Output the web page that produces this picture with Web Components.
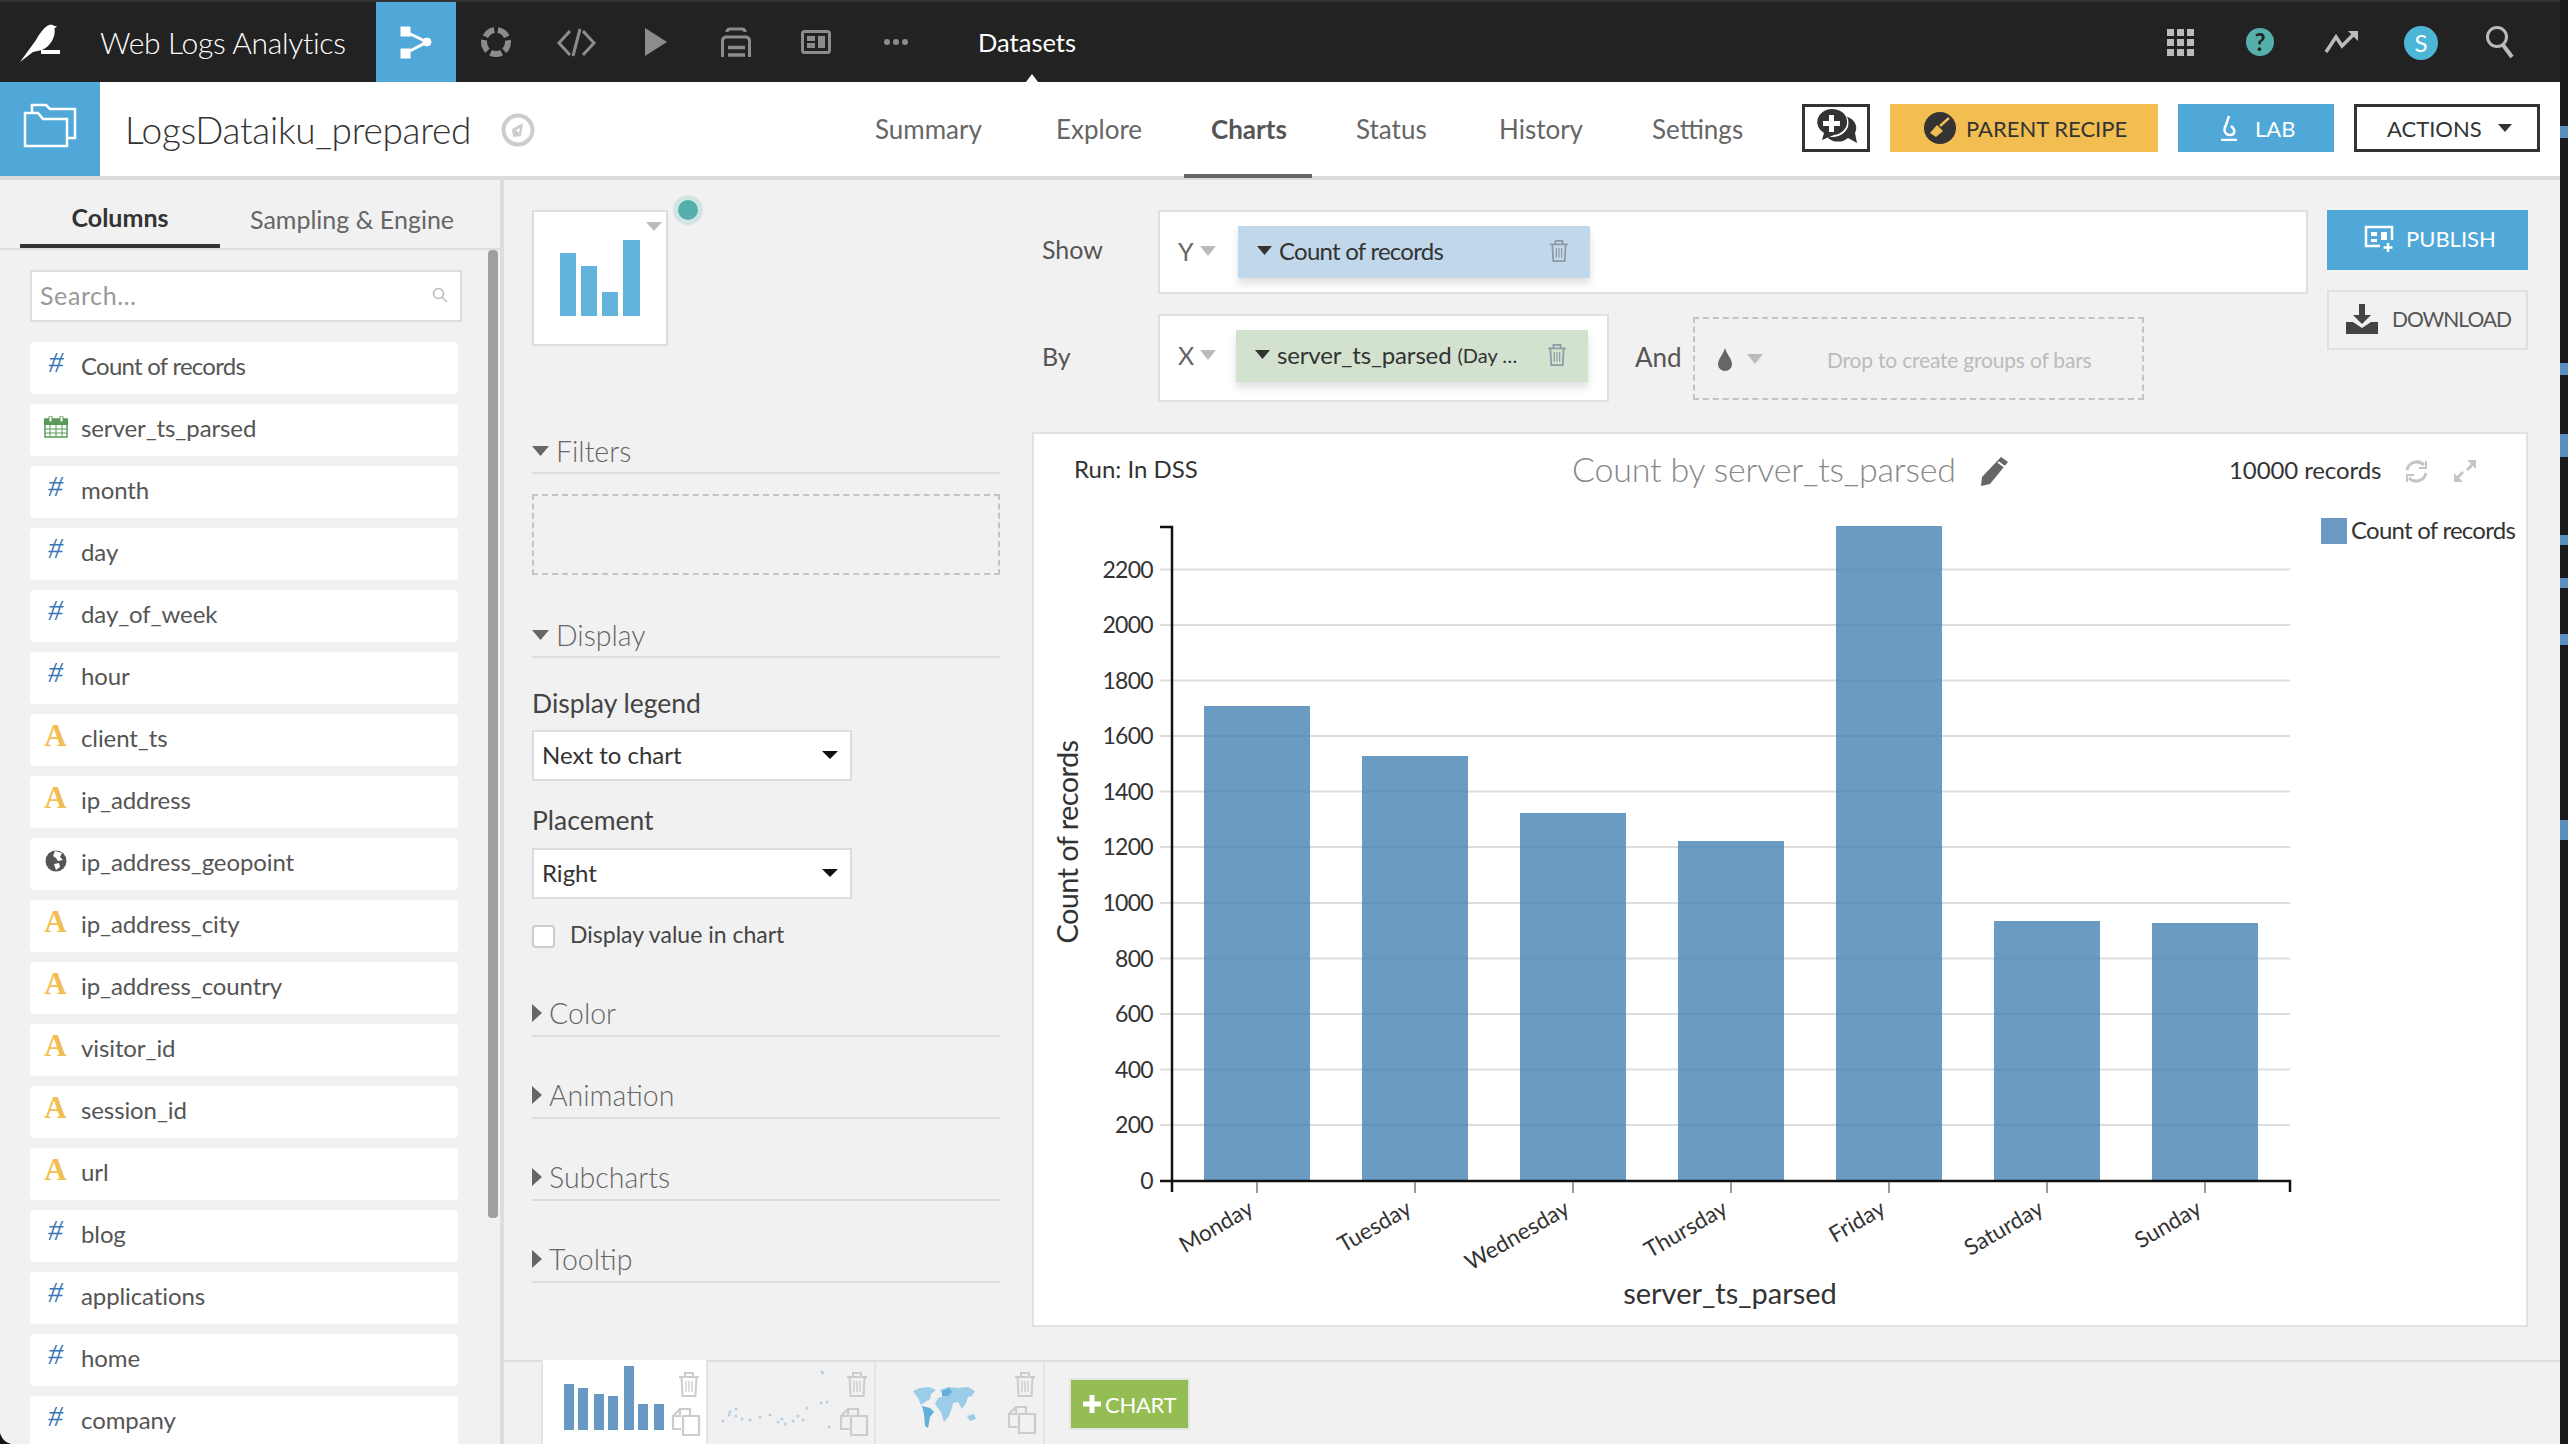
<!DOCTYPE html>
<html>
<head>
<meta charset="utf-8">
<title>Web Logs Analytics</title>
<style>
  html, body { margin: 0; height: 100%; }
  body { display: flex; width: 2568px; height: 1444px; overflow: hidden; background: #141414; font-family: "Lato", "Noto Sans", sans-serif; color: #333; }
</style>
</head>
<body>
<dss-app>
  <dss-topbar></dss-topbar>
  <dss-subbar></dss-subbar>
  <dss-main></dss-main>
</dss-app>
<window-edge></window-edge>

<script>
// iconos que se usan en varios componentes
const trashIcon = (x, y, color) => `
  <g transform="translate(${x} ${y})" fill="none" stroke="${color}" stroke-width="2">
    <path d="M0 5h20M6 5V1h8v4M2.500 5l1 19h13l1-19"/>
    <path d="M7 9v11M10 9v11M13 9v11" stroke-width="1.300"/>
  </g>`;

const copyIcon = (x, y, color) => `
  <g transform="translate(${x} ${y})" fill="none" stroke="${color}" stroke-width="2.200">
    <path d="M9 21H1V8l7-7h10v6"/>
    <path d="M1 8h7V1"/>
    <path d="M11 8h16v19H11z"/>
  </g>`;

class DssApp extends HTMLElement {
  connectedCallback() {
    this.attachShadow({ mode: 'open' }).innerHTML = `
      <style>
        :host { display: flex; flex-direction: column; width: 2560px; height: 1444px; background: #f1f1f1; border-bottom-left-radius: 14px; overflow: hidden; }
      </style>
      <slot></slot>`;
  }
}
customElements.define('dss-app', DssApp);

class WindowEdge extends HTMLElement {
  connectedCallback() {
    const blocks = [[126,138],[363,375],[434,457],[535,545],[578,588],[634,645],[820,840]];
    const stops = blocks.map(b => `linear-gradient(#5b8fc0,#5b8fc0) 0 ${b[0]}px / 100% ${b[1]-b[0]}px no-repeat`).join(',');
    this.attachShadow({ mode: 'open' }).innerHTML = `
      <style>:host { display: block; width: 8px; height: 1444px; background: ${stops}, #1a1a1a; }</style>`;
  }
}
customElements.define('window-edge', WindowEdge);

class DssTopbar extends HTMLElement {
  connectedCallback() {
    this.attachShadow({ mode: 'open' }).innerHTML = `
      <style>
        :host { display: block; height: 82px; box-sizing: border-box; border-top: 2px solid #333; background: #222; position: relative; flex: none; }
        svg { position: absolute; left: 0; top: -2px; display: block; }
        .bar { display: flex; height: 80px; align-items: center; }
        .name { margin-left: 100px; width: 276px; color: #fff; font-size: 30px; font-weight: 300; letter-spacing: -.3px; white-space: nowrap; }
        .flow { width: 80px; height: 80px; background: #4fa8d8; }
        .ds { margin-left: 522px; color: #fff; font-size: 25.5px; white-space: nowrap; }
      </style>
      <div class="bar">
        <span class="name">Web Logs Analytics</span>
        <div class="flow"></div>
        <span class="ds">Datasets</span>
      </div>
      <svg width="2560" height="82" viewBox="0 0 2560 82">
        <path fill="#fff" d="M20 62 L36 40 C39 34 43 29 47 26 C50 24 53 24.500 54 26 L57 26 L54.500 28.500 C56 37 50 47 42 50 L33 52 Z"/>
        <rect x="41" y="50" width="19" height="4" fill="#fff"/>
        <g fill="#fff" stroke="#fff">
          <rect x="401" y="27" width="9" height="9"/><rect x="401" y="49" width="9" height="9"/>
          <circle cx="427" cy="42" r="4"/>
          <path d="M406 32 L427 42 L406 53" fill="none" stroke-width="3"/>
        </g>
        <circle cx="496" cy="42" r="12" fill="none" stroke="#8c8c8c" stroke-width="6" stroke-dasharray="11.400 3.680" transform="rotate(62 496 42)"/>
        <path d="M570 31 L559 43 L570 55 M583 31 L594 43 L583 55 M580 29 L573 56" fill="none" stroke="#8c8c8c" stroke-width="3"/>
        <polygon points="645,28 667,42 645,56" fill="#8c8c8c"/>
        <g fill="none" stroke="#8c8c8c" stroke-width="3">
          <path d="M727 32 q0-3 3-3 h12 q3 0 3 3"/>
          <path d="M722.500 57 V41 q0-4 4-4 h19 q4 0 4 4 V57"/>
          <path d="M728 47.500 h17 M728 55 h17" stroke-width="3.500"/>
        </g>
        <rect x="802.500" y="31.500" width="27" height="21" rx="2" fill="none" stroke="#8c8c8c" stroke-width="3"/>
        <path d="M807 36h8v5h-8zM807 43h8v5h-8zM818 36h7v12h-7z" fill="#8c8c8c"/>
        <g fill="#8c8c8c"><circle cx="887" cy="42" r="3"/><circle cx="896" cy="42" r="3"/><circle cx="905" cy="42" r="3"/></g>
        <polygon points="1026,82 1032,74 1038,82" fill="#fff"/>
        <path fill="#bbb" d="M2167 29h7v7h-7zM2177 29h7v7h-7zM2187 29h7v7h-7zM2167 39h7v7h-7zM2177 39h7v7h-7zM2187 39h7v7h-7zM2167 49h7v7h-7zM2177 49h7v7h-7zM2187 49h7v7h-7z"/>
        <circle cx="2260" cy="42" r="14" fill="#55afaa"/>
        <text x="2260" y="51" text-anchor="middle" fill="#222" font-size="24" font-weight="700">?</text>
        <path d="M2326 52 L2336 37 L2342 46 L2354 34" fill="none" stroke="#bbb" stroke-width="3.500"/>
        <polygon points="2348,31 2358,31 2358,41" fill="#bbb"/>
        <circle cx="2421" cy="43" r="17" fill="#4db6d6"/>
        <text x="2421" y="52" text-anchor="middle" fill="#fff" font-size="24">S</text>
        <circle cx="2497" cy="37" r="9.500" fill="none" stroke="#bbb" stroke-width="3"/>
        <path d="M2503 45 L2512 57" stroke="#bbb" stroke-width="4"/>
      </svg>`;
  }
}
customElements.define('dss-topbar', DssTopbar);

class DssSubbar extends HTMLElement {
  connectedCallback() {
    const tabs = [['Summary', 875], ['Explore', 1056], ['Charts', 1211], ['Status', 1356], ['History', 1499], ['Settings', 1652]];
    this.attachShadow({ mode: 'open' }).innerHTML = `
      <style>
        :host { display: flex; height: 98px; box-sizing: border-box; border-bottom: 4px solid #ddd; background: #fff; flex: none; align-items: stretch; position: relative; }
        .box { width: 100px; height: 94px; background: #4fa8d8; flex: none; }
        .box svg { display: block; }
        .title { margin-left: 25px; font-size: 37px; font-weight: 300; letter-spacing: -.3px; color: #333; line-height: 96px; width: 376px; white-space: nowrap; flex: none; }
        .compass { margin-top: 31px; flex: none; }
        .tabs { position: absolute; left: 0; top: 0; height: 94px; width: 0; }
        .tab { position: absolute; top: 0; line-height: 94px; font-size: 26px; color: #666; white-space: nowrap; }
        .tab.on { font-weight: 700; color: #555; }
        .under { position: absolute; left: 1184px; top: 92px; width: 128px; height: 4px; background: #666; }
        .btns { position: absolute; left: 1802px; top: 22px; display: flex; height: 48px; }
        .b { box-sizing: border-box; height: 48px; display: flex; align-items: center; font-size: 22px; white-space: nowrap; }
        .talk { width: 68px; border: 3px solid #333; margin-right: 20px; }
        .parent { width: 268px; background: #f2bd51; color: #333; margin-right: 20px; padding-left: 34px; }
        .lab { width: 156px; background: #4fa8d8; color: #fff; margin-right: 20px; padding-left: 42px; }
        .act { width: 186px; border: 3px solid #333; background: #fff; color: #333; padding-left: 30px; font-size: 22px; }
        svg { flex: none; }
      </style>
      <div class="box">
        <svg width="100" height="94" viewBox="0 82 100 94" fill="none" stroke="#fff" stroke-width="2.500">
          <path d="M32 112 V105 H46 L50 109 H75 V138 H68"/>
          <path d="M25 113 H38 L43 119 H67 V146 H25 Z"/>
        </svg>
      </div>
      <div class="title">LogsDataiku_prepared</div>
      <svg class="compass" width="34" height="34" viewBox="0 0 34 34">
        <circle cx="17" cy="17" r="14.500" fill="none" stroke="#ccc" stroke-width="4"/>
        <polygon points="11,16 22,10 20,23 12,24" fill="#ccc"/>
        <polygon points="15,17 19,15 18,20" fill="#fff"/>
      </svg>
      <div class="tabs">
        ${tabs.map(t => `<span class="tab${t[0] === 'Charts' ? ' on' : ''}" style="left:${t[1]}px">${t[0]}</span>`).join('')}
      </div>
      <div class="under"></div>
      <div class="btns">
        <div class="b talk">
          <svg width="62" height="42" viewBox="0 0 62 42">
            <path fill="#333" d="M38 9a14 12 0 0 1 12 17l2 10-9-5a14 12 0 0 1-20 0 z"/>
            <ellipse cx="27" cy="16" rx="16.500" ry="14" fill="#fff"/>
            <path fill="#333" d="M26 2a14.500 13 0 0 1 3 26l-12 5 2-7a14.500 13 0 0 1 7-24z"/>
            <path fill="#fff" d="M24 8h5v6h6v5h-6v6h-5v-6h-6v-5h6z"/>
          </svg>
        </div>
        <div class="b parent">
          <svg width="32" height="32" viewBox="0 0 32 32" style="margin-right:10px">
            <circle cx="16" cy="16" r="16" fill="#333"/>
            <path fill="#f2bd51" d="M6 21 L13 13 L19 19 L12 25 Z"/>
            <path d="M16 14 L25 6" stroke="#f2bd51" stroke-width="2.500"/>
          </svg>PARENT RECIPE
        </div>
        <div class="b lab">
          <svg width="18" height="26" viewBox="0 0 18 26" fill="none" stroke="#fff" stroke-width="2.500" style="margin-right:17px">
            <path d="M9 1 L6 10 C3 15 5 20 10 20 C15 20 16 15 11 11 M1 25 H17"/>
          </svg>LAB
        </div>
        <div class="b act">ACTIONS
          <svg width="14" height="8" viewBox="0 0 14 8" style="margin-left:16px"><polygon points="0,0 14,0 7,8" fill="#333"/></svg>
        </div>
      </div>`;
  }
}
customElements.define('dss-subbar', DssSubbar);

class ColItem extends HTMLElement {
  connectedCallback() {
    const type = this.getAttribute('type');
    let icon = '';
    if (type === 'num') icon = '<span class="num">#</span>';
    if (type === 'str') icon = '<span class="str">A</span>';
    if (type === 'date') icon = `<svg width="24" height="22" viewBox="0 0 24 22">
        <rect x="1" y="3" width="22" height="18" fill="#fff" stroke="#5b9a5b" stroke-width="1.500"/>
        <rect x="0" y="3" width="24" height="6" fill="#5b9a5b"/>
        <path d="M1 13h22M1 17h22M6 9v12M12 9v12M18 9v12" stroke="#5b9a5b"/>
        <rect x="5" y="0" width="3" height="6" rx="1" fill="#fff" stroke="#5b9a5b"/>
        <rect x="16" y="0" width="3" height="6" rx="1" fill="#fff" stroke="#5b9a5b"/>
      </svg>`;
    if (type === 'geo') icon = `<svg width="22" height="22" viewBox="0 0 22 22">
        <circle cx="11" cy="11" r="10.500" fill="#555"/>
        <path d="M10 1 L17 3 L15 7 L18 10 L13 11 L11 8 L8 6 Z M9 14 L14 13 L15 17 L11 20 Z" fill="#fff"/>
      </svg>`;
    const tight = this.textContent === 'Count of records' ? 'letter-spacing:-.75px;' : 'letter-spacing:-.1px;';
    this.attachShadow({ mode: 'open' }).innerHTML = `
      <style>
        :host { display: flex; width: 428px; height: 52px; box-sizing: border-box; padding-bottom: 6px; flex: none; background: #fff; border-radius: 4px; align-items: center; margin-bottom: 10px; font-size: 24px; color: #555; ${tight} }
        .ic { width: 51px; display: flex; justify-content: center; flex: none; }
        .num { font-family: "Liberation Serif", serif; font-style: italic; color: #3a77b8; font-size: 30px; line-height: 30px; margin-top: -6px; }
        .str { font-family: "Liberation Serif", serif; color: #f2bd51; font-size: 31px; font-weight: 700; line-height: 30px; margin-top: -3px; }
      </style>
      <div class="ic">${icon}</div><slot></slot>`;
  }
}
customElements.define('col-item', ColItem);

class DssColumns extends HTMLElement {
  connectedCallback() {
    const cols = [['num','Count of records'],['date','server_ts_parsed'],['num','month'],['num','day'],['num','day_of_week'],['num','hour'],
      ['str','client_ts'],['str','ip_address'],['geo','ip_address_geopoint'],['str','ip_address_city'],['str','ip_address_country'],['str','visitor_id'],
      ['str','session_id'],['str','url'],['num','blog'],['num','applications'],['num','home'],['num','company']];
    this.attachShadow({ mode: 'open' }).innerHTML = `
      <style>
        :host { display: block; width: 500px; height: 1264px; flex: none; border-right: 4px solid #ddd; position: relative; background: #f1f1f1; overflow: hidden; }
        .tabs { display: flex; height: 68px; border-bottom: 2px solid #ddd; padding-left: 20px; align-items: flex-start; }
        .t1 { width: 200px; height: 64px; border-bottom: 4px solid #333; text-align: center; font-size: 25px; font-weight: 700; line-height: 75px; color: #333; }
        .t2 { margin-left: 30px; font-size: 25px; line-height: 78px; color: #666; white-space: nowrap; }
        .search { margin: 20px 0 20px 30px; width: 432px; height: 52px; box-sizing: border-box; border: 2px solid #ddd; background: #fff; display: flex; align-items: center; justify-content: space-between; padding: 0 12px 2px 8px; color: #999; font-size: 25px; letter-spacing: .6px; }
        .list { display: flex; flex-direction: column; margin-left: 30px; }
        .thumb { position: absolute; left: 488px; top: 70px; width: 10px; height: 968px; background: #a0a0a0; border-radius: 4px; }
      </style>
      <div class="tabs"><div class="t1">Columns</div><div class="t2">Sampling &amp; Engine</div></div>
      <div class="search">Search…
        <svg width="16" height="16" viewBox="0 0 16 16" fill="none" stroke="#bbb" stroke-width="1.500"><circle cx="6.500" cy="6.500" r="5"/><path d="M10 10l5 5"/></svg>
      </div>
      <div class="list">${cols.map(c => `<col-item type="${c[0]}">${c[1]}</col-item>`).join('')}</div>
      <div class="thumb"></div>`;
  }
}
customElements.define('dss-columns', DssColumns);

class DssSection extends HTMLElement {
  connectedCallback() {
    const open = this.hasAttribute('open');
    this.attachShadow({ mode: 'open' }).innerHTML = `
      <style>
        :host { display: flex; height: 44px; box-sizing: border-box; padding-bottom: ${open ? 1 : 3}px; border-bottom: 2px solid #ddd; align-items: center; font-size: 28.5px; font-weight: 300; color: #666; }
        svg { flex: none; margin-right: 7px; }
      </style>
      ${open
        ? '<svg width="17" height="10" viewBox="0 0 17 10"><polygon points="0,0 17,0 8.500,10" fill="#666"/></svg>'
        : '<svg width="10" height="18" viewBox="0 0 10 18"><polygon points="0,0 10,9 0,18" fill="#666"/></svg>'}
      <slot></slot>`;
  }
}
customElements.define('dss-section', DssSection);

class DssSelect extends HTMLElement {
  connectedCallback() {
    this.attachShadow({ mode: 'open' }).innerHTML = `
      <style>
        :host { display: flex; width: 320px; height: 51px; box-sizing: border-box; border: 2px solid #ddd; background: #fff; align-items: center; justify-content: space-between; padding: 0 12px 2px 8px; font-size: 24px; color: #333; }
      </style>
      <slot></slot>
      <svg width="16" height="8" viewBox="0 0 16 8"><polygon points="0,0 16,0 8,8" fill="#111"/></svg>`;
  }
}
customElements.define('dss-select', DssSelect);

class DssDisplay extends HTMLElement {
  connectedCallback() {
    this.attachShadow({ mode: 'open' }).innerHTML = `
      <style>
        :host { display: block; width: 468px; margin: 0 32px 0 28px; padding-top: 30px; flex: none; }
        .type { width: 136px; height: 136px; box-sizing: border-box; border: 2px solid #ddd; background: #fff; position: relative; }
        .type svg { display: block; }
        .dot { position: absolute; left: 144px; top: -12px; width: 20px; height: 20px; border-radius: 50%; background: #55afaa; box-shadow: 0 0 0 5px #d0e5e4; }
        .filters { margin-top: 84px; }
        .dash { margin-top: 20px; height: 81px; box-sizing: border-box; border: 2px dashed #c4c4c4; }
        .display { margin-top: 39px; }
        .lab { height: 30px; line-height: 30px; font-size: 26.5px; color: #444; }
        .l1 { margin-top: 30px; margin-bottom: 12px; }
        .l2 { margin-top: 24px; margin-bottom: 13px; }
        .check { display: flex; align-items: center; margin-top: 25px; height: 24px; font-size: 23px; color: #444; }
        .box { width: 23px; height: 23px; box-sizing: border-box; border: 2px solid #ccc; border-radius: 4px; background: #fff; margin-right: 15px; flex: none; }
        .check span { margin-top: -5px; }
        .color { margin-top: 45px; }
        .more { margin-top: 38px; }
      </style>
      <div class="type">
        <svg width="132" height="132" viewBox="534 212 132 132">
          <polygon points="646,222 662,222 654,231" fill="#bbb"/>
          <g fill="#62b4dc"><rect x="560" y="253" width="16" height="63"/><rect x="581" y="266" width="16" height="50"/><rect x="602" y="292" width="16" height="24"/><rect x="623" y="240" width="17" height="76"/></g>
        </svg>
        <div class="dot"></div>
      </div>
      <dss-section open class="filters">Filters</dss-section>
      <div class="dash"></div>
      <dss-section open class="display">Display</dss-section>
      <div class="lab l1">Display legend</div>
      <dss-select>Next to chart</dss-select>
      <div class="lab l2">Placement</div>
      <dss-select>Right</dss-select>
      <div class="check"><div class="box"></div><span>Display value in chart</span></div>
      <dss-section class="color">Color</dss-section>
      <dss-section class="more">Animation</dss-section>
      <dss-section class="more">Subcharts</dss-section>
      <dss-section class="more">Tooltip</dss-section>`;
  }
}
customElements.define('dss-display', DssDisplay);

class DssPill extends HTMLElement {
  connectedCallback() {
    const color = this.getAttribute('color');
    const spacing = this.getAttribute('spacing') || '0';
    this.attachShadow({ mode: 'open' }).innerHTML = `
      <style>
        :host { display: flex; width: 352px; height: 52px; background: ${color}; box-shadow: 0 6px 8px rgba(0,0,0,.12); align-items: center; padding: 0 0 3px 19px; box-sizing: border-box; font-size: 24px; letter-spacing: ${spacing}; color: #333; white-space: nowrap; position: relative; flex: none; }
        .arr { margin-right: 7px; flex: none; }
        .tr { position: absolute; left: 312px; top: 14px; }
        ::slotted(small) { font-size: 20px; letter-spacing: 0; }
      </style>
      <svg class="arr" width="15" height="9" viewBox="0 0 15 9"><polygon points="0,0 15,0 7.500,9" fill="#333"/></svg>
      <slot></slot>
      <svg class="tr" width="18" height="23" viewBox="0 0 20 26">${trashIcon(0, 0, '#8f9aa5')}</svg>`;
  }
}
customElements.define('dss-pill', DssPill);

class DssBuilder extends HTMLElement {
  connectedCallback() {
    const arrow = '<svg class="axa" width="16" height="10" viewBox="0 0 16 10"><polygon points="0,0 16,0 8,10" fill="#bbb"/></svg>';
    this.attachShadow({ mode: 'open' }).innerHTML = `
      <style>
        :host { display: flex; padding-top: 30px; height: 192px; }
        .left { width: 1266px; margin-right: 19px; padding-left: 10px; display: flex; flex-direction: column; gap: 20px; }
        .row { display: flex; align-items: flex-start; flex: none; }
        .lbl { width: 116px; font-size: 25px; color: #555; flex: none; }
        .zone { box-sizing: border-box; background: #fff; border: 2px solid #e0e0e0; display: flex; align-items: flex-start; flex: none; padding: 14px 0 0 18px; }
        .zone.y { width: 1150px; height: 84px; }
        .zone.x { width: 451px; height: 88px; }
        .ax { font-size: 25px; line-height: 50px; color: #666; width: 22px; flex: none; }
        .axa { margin: 20px 22px 0 0; flex: none; display: block; }
        .x .axa { margin-right: 20px; }
        .and { width: 84px; padding-left: 26px; box-sizing: border-box; font-size: 26px; color: #555; flex: none; }
        .drop { box-sizing: border-box; width: 451px; height: 83px; border: 2px dashed #c4c4c4; display: flex; align-items: center; padding-left: 22px; color: #bbb; font-size: 21px; letter-spacing: -.2px; white-space: nowrap; flex: none; }
        .right { width: 201px; display: flex; flex-direction: column; gap: 20px; flex: none; }
        .btn { box-sizing: border-box; height: 60px; display: flex; align-items: center; font-size: 22px; padding-bottom: 3px; white-space: nowrap; }
        .btn svg { flex: none; }
        .pub { background: #4fa8d8; color: #fff; padding-left: 37px; }
        .dl { border: 2px solid #e0e0e0; color: #555; padding-left: 17px; font-size: 21px; letter-spacing: -1px; }
      </style>
      <div class="left">
        <div class="row">
          <div class="lbl" style="line-height:78px">Show</div>
          <div class="zone y"><span class="ax">Y</span>${arrow}<dss-pill color="#c1d7ea" spacing="-.75px">Count of records</dss-pill></div>
        </div>
        <div class="row">
          <div class="lbl" style="line-height:84px">By</div>
          <div class="zone x"><span class="ax">X</span>${arrow}<dss-pill color="#d2e2cf" spacing="-.15px">server_ts_parsed&nbsp;<small>(Day …</small></dss-pill></div>
          <div class="and" style="line-height:86px">And</div>
          <div class="drop" style="margin-top:3px">
            <svg width="16" height="24" viewBox="0 0 16 24"><path d="M8 1 C10 8 15 12 15 17 A7 7 0 0 1 1 17 C1 12 6 8 8 1Z" fill="#666"/></svg>
            <svg width="16" height="10" viewBox="0 0 16 10" style="margin:0 64px 0 14px"><polygon points="0,0 16,0 8,10" fill="#bbb"/></svg>
            <span style="margin-top:2px">Drop to create groups of bars</span>
          </div>
        </div>
      </div>
      <div class="right">
        <div class="btn pub">
          <svg width="30" height="28" viewBox="0 0 30 28" fill="none" stroke="#fff" stroke-width="2.500" style="margin-right:12px">
            <path d="M16 21H2V2h26v13"/><path d="M7 7h6v4H7zM7 14h6v3H7zM17 7h6v8h-6z" fill="#fff" stroke="none"/><path d="M24 18v9M19.500 22.500h9"/>
          </svg>PUBLISH
        </div>
        <div class="btn dl">
          <svg width="32" height="30" viewBox="0 0 32 30" style="margin-right:14px">
            <path d="M13 0h6v11h6l-9 9-9-9h6z" fill="#444"/><path d="M0 18h7l9 6 9-6h7v12H0z" fill="#444"/>
          </svg>DOWNLOAD
        </div>
      </div>`;
  }
}
customElements.define('dss-builder', DssBuilder);

class DssChart extends HTMLElement {
  connectedCallback() {
    const ticks = [[2200,569.5],[2000,625],[1800,680.5],[1600,736],[1400,791.5],[1200,847],[1000,903],[800,958.5],[600,1014],[400,1069.5],[200,1125],[0,1181]];
    const bars = [['Monday',1204,706],['Tuesday',1362,756],['Wednesday',1520,813],['Thursday',1678,841],['Friday',1836,526],['Saturday',1994,921],['Sunday',2152,923]];
    let grid = '', ylab = '', rects = '', xlab = '';
    for (const [v, y] of ticks) {
      if (v > 0) grid += `<path d="M1160 ${y}H2290" stroke="#ddd" stroke-width="2"/>`;
      ylab += `<text x="1153" y="${y + 8}" text-anchor="end" font-size="23" letter-spacing="-.7">${v}</text>`;
    }
    for (const [name, x, top] of bars) {
      rects += `<rect x="${x}" y="${top}" width="106" height="${1181 - top}" fill="#4682b4" opacity=".8"/>`;
      xlab += `<path d="M${x + 53} 1182v11" stroke="#999" stroke-width="2"/>`;
      xlab += `<text x="${x + 51}" y="1213" text-anchor="end" font-size="22.5" fill="#333" transform="rotate(-30 ${x + 51} 1213)">${name}</text>`;
    }
    this.attachShadow({ mode: 'open' }).innerHTML = `
      <style>
        :host { display: block; box-sizing: border-box; width: 1496px; height: 895px; margin-top: 30px; border: 2px solid #e2e2e2; background: #fff; }
        .head { display: flex; align-items: center; height: 74px; padding: 0 49px 0 40px; font-size: 24px; color: #333; white-space: nowrap; }
        .run { width: 498px; margin-bottom: 6px; }
        .title { width: 405px; font-size: 34px; font-weight: 300; letter-spacing: -.2px; color: #888; flex: none; margin-bottom: 5px; }
        .rec { margin-left: 220px; width: 175px; letter-spacing: -.1px; margin-bottom: 3px; }
        svg { display: block; flex: none; }
        .chart { font-size: 24px; fill: #333; font-family: "Lato", "Noto Sans", sans-serif; }
      </style>
      <div class="head">
        <span class="run">Run: In DSS</span>
        <span class="title">Count by server_ts_parsed</span>
        <svg width="32" height="32" viewBox="0 0 32 32"><path d="M24 2 L31 7 L13 29 L4 31 L5 22 Z" fill="#666"/><path d="M21 7l7 5" stroke="#fff" stroke-width="2"/></svg>
        <span class="rec">10000 records</span>
        <svg width="25" height="25" viewBox="0 0 25 25" fill="none" stroke="#c4c4c4" stroke-width="3" style="margin-right:24px">
          <path d="M3 11a10 10 0 0 1 17-5M22 14a10 10 0 0 1-17 5"/><path d="M22 2v7h-7M3 23v-7h7" stroke-width="2"/>
        </svg>
        <svg width="24" height="24" viewBox="0 0 24 24" fill="#c4c4c4">
          <path d="M14 1h9v9l-3-3-5 5-2-2 5-5zM10 23H1v-9l3 3 5-5 2 2-5 5z"/>
        </svg>
      </div>
      <svg class="chart" width="1492" height="817" viewBox="1034 508 1492 817">
        ${grid}${rects}
        <path d="M1160 527H1172V1192M1160 1181H2290V1192" fill="none" stroke="#111" stroke-width="2.500"/>
        ${ylab}${xlab}
        <text transform="translate(1078 842) rotate(-90)" text-anchor="middle" font-size="29" letter-spacing="-.6">Count of records</text>
        <text x="1730" y="1304" text-anchor="middle" font-size="29">server_ts_parsed</text>
        <rect x="2321" y="518" width="26" height="26" fill="#4682b4" opacity=".8"/>
        <text x="2351" y="539" letter-spacing="-.75">Count of records</text>
      </svg>`;
  }
}
customElements.define('dss-chart', DssChart);

class DssThumbs extends HTMLElement {
  connectedCallback() {
    const mini = [[564,1384],[578,1388],[594,1394],[608,1396],[624,1366],[638,1404],[654,1404]]
      .map(b => `<rect x="${b[0]}" y="${b[1]}" width="10" height="${1430 - b[1]}" fill="#6a98c4"/>`).join('');
    const dots = [[723,1421],[730,1412],[736,1409],[736,1416],[742,1419],[760,1417],[770,1415],[778,1422],[782,1419],[785,1424],[793,1421],[798,1416],[803,1420],[807,1408],[821,1403],[827,1402],[823,1373],[822,1372],[729,1415],[750,1420],[829,1427]]
      .map(d => `<circle cx="${d[0]}" cy="${d[1]}" r="1.500" fill="#b6cfe6"/>`).join('');
    this.attachShadow({ mode: 'open' }).innerHTML = `
      <style>
        :host { display: flex; height: 84px; box-sizing: border-box; border-top: 2px solid #ddd; padding-left: 37px; flex: none; background: #f1f1f1; }
        .th { box-sizing: border-box; height: 82px; border-right: 2px solid #e4e4e4; flex: none; }
        .th svg { display: block; }
        .on { width: 167px; background: #fff; border-left: 2px solid #e4e4e4; margin-top: -2px; height: 84px; }
        .two { width: 168px; }
        .three { width: 169px; }
        .add { margin: 16px 0 0 24px; width: 121px; height: 52px; box-sizing: border-box; background: #94bd54; border: 2px solid #e4e4e4; color: #fff; font-size: 22px; letter-spacing: -.3px; display: flex; align-items: center; padding-left: 12px; white-space: nowrap; }
        .add svg { margin-right: 4px; flex: none; }
      </style>
      <div class="th on">
        <svg width="165" height="84" viewBox="543 1360 165 84">${mini}${trashIcon(679, 1372, '#ccc')}${copyIcon(672, 1408, '#ccc')}</svg>
      </div>
      <div class="th two">
        <svg width="166" height="82" viewBox="708 1362 166 82">${dots}${trashIcon(847, 1372, '#ccc')}${copyIcon(840, 1408, '#ccc')}</svg>
      </div>
      <div class="th three">
        <svg width="167" height="82" viewBox="876 1362 167 82">
          <path fill="#9ccde8" d="M913 1391 L920 1388 L929 1387 L936 1390 L931 1394 L930 1399 L925 1402 L921 1405 L918 1398 L915 1394 Z M940 1390 L948 1387 L958 1388 L968 1387 L975 1391 L972 1396 L968 1397 L966 1403 L962 1409 L958 1402 L953 1403 L952 1408 L949 1416 L944 1422 L941 1412 L935 1404 L938 1398 L944 1396 Z M967 1416 L974 1414 L976 1419 L970 1421 Z"/>
          <path fill="#5fb0dc" d="M922 1406 L930 1408 L934 1412 L930 1417 L928 1428 L925 1426 L924 1414 Z M942 1391 L949 1388 L952 1392 L948 1396 L942 1396 Z"/>
          ${trashIcon(1015, 1372, '#ccc')}${copyIcon(1008, 1406, '#ccc')}
        </svg>
      </div>
      <div class="add">
        <svg width="18" height="18" viewBox="0 0 18 18"><path d="M6.500 0h5v6.500H18v5h-6.500V18h-5v-6.500H0v-5h6.500z" fill="#fff"/></svg>CHART
      </div>`;
  }
}
customElements.define('dss-thumbs', DssThumbs);

class DssMain extends HTMLElement {
  connectedCallback() {
    this.attachShadow({ mode: 'open' }).innerHTML = `
      <style>
        :host { display: flex; flex: 1; min-height: 0; }
        .rest { flex: 1; display: flex; flex-direction: column; min-width: 0; }
        .content { display: flex; height: 1180px; flex: none; }
        .work { width: 1496px; flex: none; }
      </style>
      <dss-columns></dss-columns>
      <div class="rest">
        <div class="content">
          <dss-display></dss-display>
          <div class="work">
            <dss-builder></dss-builder>
            <dss-chart></dss-chart>
          </div>
        </div>
        <dss-thumbs></dss-thumbs>
      </div>`;
  }
}
customElements.define('dss-main', DssMain);
</script>
</body>
</html>
